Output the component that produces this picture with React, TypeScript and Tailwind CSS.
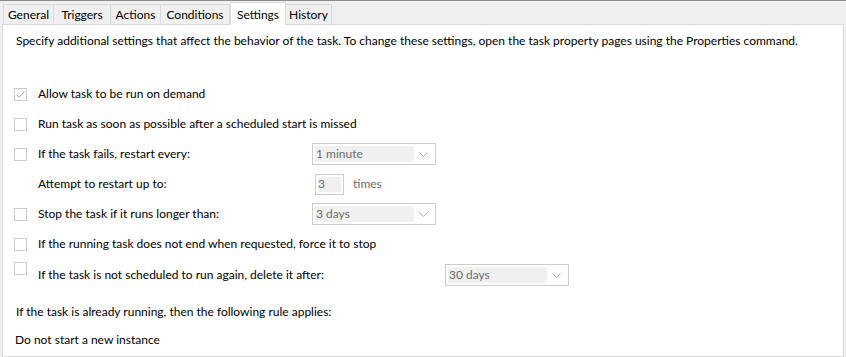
import React from "react";

const tabs = [
  { label: "General", w: 51 },
  { label: "Triggers", w: 57 },
  { label: "Actions", w: 50 },
  { label: "Conditions", w: 69 },
  { label: "Settings", w: 56, active: true },
  { label: "History", w: 46 },
];

function Check({ checked, className = "" }: { checked?: boolean; className?: string }) {
  return (
    <div className={`w-[13px] h-[13px] border border-[#cccccc] bg-white flex items-center justify-center shrink-0 ${className}`}>
      {checked && (
        <svg width="11" height="11" viewBox="0 0 11 11">
          <path d="M1.5 5.5 L4.2 8.2 L9.5 2.5" fill="none" stroke="#a0a0a0" strokeWidth="1" />
        </svg>
      )}
    </div>
  );
}

function Chevron() {
  return (
    <svg width="9" height="5" viewBox="0 0 9 5">
      <path d="M0.5 0.5 L4.5 4.5 L8.5 0.5" fill="none" stroke="#b0b0b0" strokeWidth="1" />
    </svg>
  );
}

function Dropdown({ value, className = "" }: { value: string; className?: string }) {
  return (
    <div className={`h-[22px] w-[124px] border border-[#cccccc] bg-white flex items-center p-[2px] shrink-0 ${className}`}>
      <div className="h-full flex-1 bg-[#f0f0f0] text-[#6d6d6d] flex items-center pl-[1px]">{value}</div>
      <div className="w-[19px] flex items-center justify-center">
        <Chevron />
      </div>
    </div>
  );
}

function Row({ children, className = "" }: { children: React.ReactNode; className?: string }) {
  return <div className={`h-[30px] flex items-center ${className}`}>{children}</div>;
}

export default function App() {
  return (
    <div
      className="w-[846px] h-[357px] bg-[#f0f0f0] border-t border-[#8c8c8c] overflow-hidden text-[12px] text-black flex flex-col whitespace-nowrap"
      style={{ fontFamily: 'Lato, "Noto Sans", sans-serif' }}
    >
      <div className="h-[23px] flex items-end pl-[3px] relative z-10">
        {tabs.map((t) =>
          t.active ? (
            <div
              key={t.label}
              className="h-[23px] bg-white border border-b-0 border-[#d9d9d9] flex items-start justify-center pt-[3px] -mb-[1px] shrink-0"
              style={{ width: t.w }}
            >
              {t.label}
            </div>
          ) : (
            <div
              key={t.label}
              className="h-[20px] bg-[#f0f0f0] border border-b-0 border-l-0 first:border-l border-[#d9d9d9] flex items-center justify-center shrink-0"
              style={{ width: t.w }}
            >
              {t.label}
            </div>
          )
        )}
      </div>
      <div className="flex-1 ml-[2px] mr-[2px] bg-white border border-[#d9d9d9] flex flex-col">
        <div className="h-[32px] flex items-center pl-[13px]">
          Specify additional settings that affect the behavior of the task. To change these settings, open the task property pages using the Properties command.
        </div>
        <div className="h-[22px]" />
        <div className="pl-[11px] flex flex-col">
          <Row>
            <Check checked />
            <span className="ml-[11px]">Allow task to be run on demand</span>
          </Row>
          <Row>
            <Check />
            <span className="ml-[11px]">Run task as soon as possible after a scheduled start is missed</span>
          </Row>
          <Row>
            <Check />
            <span className="ml-[11px] w-[274px]">If the task fails, restart every:</span>
            <Dropdown value="1 minute" />
          </Row>
          <Row>
            <span className="ml-[24px] w-[277px]">Attempt to restart up to:</span>
            <div className="h-[21px] w-[29px] border border-[#cccccc] p-[2px] shrink-0">
              <div className="h-full bg-[#f0f0f0] text-[#6d6d6d] flex items-center">3</div>
            </div>
            <span className="ml-[9px] text-[#6d6d6d]">times</span>
          </Row>
          <Row>
            <Check />
            <span className="ml-[11px] w-[274px]">Stop the task if it runs longer than:</span>
            <Dropdown value="3 days" />
          </Row>
          <Row>
            <Check />
            <span className="ml-[11px]">If the running task does not end when requested, force it to stop</span>
          </Row>
          <Row className="items-start">
            <Check className="mt-[3px]" />
            <div className="ml-[11px] h-[30px] flex items-center pt-[2px]">
              <span className="w-[407px]">If the task is not scheduled to run again, delete it after:</span>
              <Dropdown value="30 days" />
            </div>
          </Row>
        </div>
        <div className="h-[8px]" />
        <div className="h-[30px] flex items-center pl-[13px]">If the task is already running, then the following rule applies:</div>
        <div className="h-[26px] flex items-center pl-[12px]">Do not start a new instance</div>
      </div>
    </div>
  );
}
